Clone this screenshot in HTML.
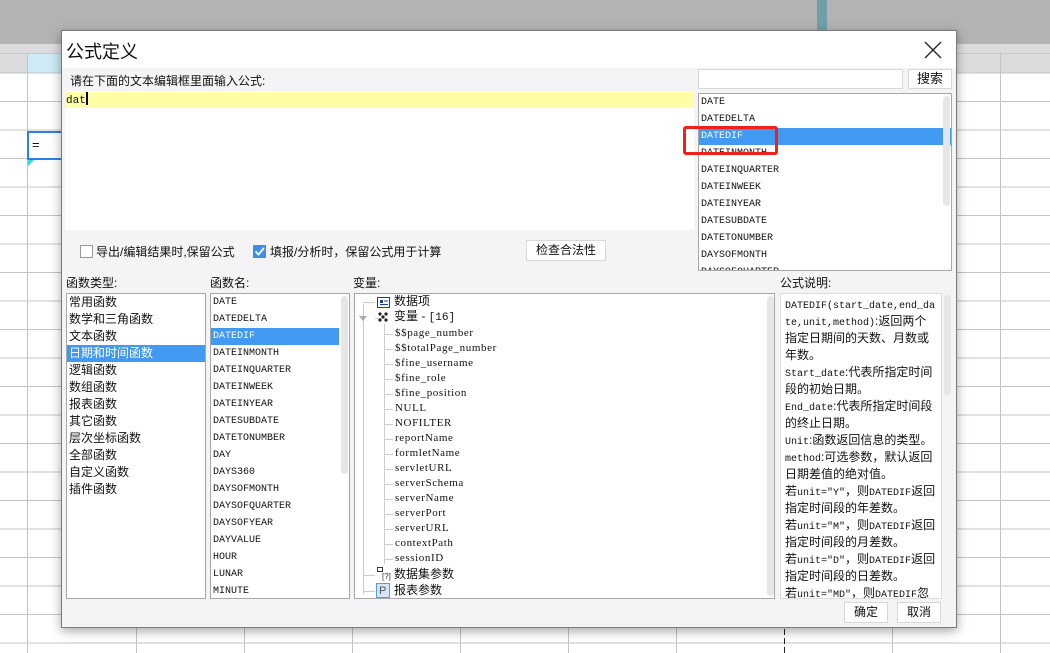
<!DOCTYPE html>
<html><head><meta charset="utf-8"><style>
*{margin:0;padding:0;box-sizing:border-box}
body{width:1050px;height:653px;overflow:hidden;position:relative;background:#fff;font-family:"Liberation Sans","Noto Sans CJK SC",sans-serif;font-size:12px;color:#111}
.abs{position:absolute}
.m{font-family:"Liberation Mono","Noto Sans CJK SC",monospace;font-size:10px}
.list{position:absolute;background:#fff;border:1px solid #a8a8a8}
.row{height:17px;line-height:17px;padding-left:2px;white-space:nowrap}
.sel{background:#4299f1;color:#fff}
.btn{position:absolute;background:#fff;border:1px solid #d8d8d8;text-align:center;font-size:12px}
.sb{position:absolute;background:#e6e6e6;border-radius:4px;width:7px}
.d span{line-height:1px}
</style></head><body>
<div class="abs" style="left:0;top:0;width:1050px;height:44px;background:#b3b3b3"></div>
<div class="abs" style="left:817px;top:0;width:10px;height:32px;background:#6f9fa8"></div>
<div class="abs" style="left:0;top:44px;width:1050px;height:29px;background:#dcdcde"></div>
<div class="abs" style="left:27px;top:54px;width:40px;height:19px;background:#cdeaf6"></div>
<div class="abs" style="left:0;top:53px;width:1050px;height:1px;background:#c8c8c8"></div>
<svg class="abs" style="left:0;top:53px" width="1050" height="600">
<g stroke="#c4c4c4" stroke-width="1">
<line x1="27.5" y1="0" x2="27.5" y2="600"/><line x1="136.5" y1="0" x2="136.5" y2="600"/><line x1="244.5" y1="0" x2="244.5" y2="600"/><line x1="352.5" y1="0" x2="352.5" y2="600"/><line x1="460.5" y1="0" x2="460.5" y2="600"/><line x1="568.5" y1="0" x2="568.5" y2="600"/><line x1="676.5" y1="0" x2="676.5" y2="600"/><line x1="892.5" y1="0" x2="892.5" y2="600"/><line x1="1000.5" y1="0" x2="1000.5" y2="600"/>
<line x1="0" y1="20" x2="1050" y2="20"/><line x1="0" y1="48.5" x2="1050" y2="48.5"/><line x1="0" y1="77" x2="1050" y2="77"/><line x1="0" y1="105.5" x2="1050" y2="105.5"/><line x1="0" y1="134" x2="1050" y2="134"/><line x1="0" y1="162.5" x2="1050" y2="162.5"/><line x1="0" y1="191" x2="1050" y2="191"/><line x1="0" y1="219.5" x2="1050" y2="219.5"/><line x1="0" y1="248" x2="1050" y2="248"/><line x1="0" y1="276.5" x2="1050" y2="276.5"/><line x1="0" y1="305" x2="1050" y2="305"/><line x1="0" y1="333.5" x2="1050" y2="333.5"/><line x1="0" y1="362" x2="1050" y2="362"/><line x1="0" y1="390.5" x2="1050" y2="390.5"/><line x1="0" y1="419" x2="1050" y2="419"/><line x1="0" y1="447.5" x2="1050" y2="447.5"/><line x1="0" y1="476" x2="1050" y2="476"/><line x1="0" y1="504.5" x2="1050" y2="504.5"/><line x1="0" y1="533" x2="1050" y2="533"/><line x1="0" y1="561.5" x2="1050" y2="561.5"/><line x1="0" y1="590" x2="1050" y2="590"/>
</g>
<line x1="784.5" y1="0" x2="784.5" y2="600" stroke="#222" stroke-dasharray="6,3"/>
</svg>
<div class="abs" style="left:27px;top:131px;width:36px;height:29px;border:2px solid #2d7ff0;padding-left:3px;line-height:24px;font-size:13px">=</div>
<div class="abs" style="left:28px;top:160px;width:0;height:0;border-left:6px solid #3dd;border-bottom:6px solid transparent"></div>
<div class="abs" style="left:61px;top:30px;width:896px;height:598px;background:#f4f4f6;border:1px solid #7a7a7a;box-shadow:0 3px 10px rgba(0,0,0,.35)">
<div class="abs" style="left:0;top:0;width:894px;height:37px;background:#fff"></div>
<div class="abs" style="left:4px;top:7px;font-size:18px">公式定义</div>
<svg class="abs" style="left:862px;top:10px" width="18" height="18"><path d="M1 1L17 17M17 1L1 17" stroke="#222" stroke-width="1.3"/></svg>
</div>
<div class="abs" style="left:70px;top:72px;font-size:12px">请在下面的文本编辑框里面输入公式:</div>
<div class="abs" style="left:65px;top:91px;width:629px;height:139px;background:#fff"></div>
<div class="abs" style="left:65px;top:92px;width:629px;height:16px;background:#ffffa8"></div>
<div class="abs m" style="left:66px;top:92px;line-height:16px;font-size:11px">dat<span style="display:inline-block;width:2px;height:13px;background:#000;vertical-align:-2px"></span></div>
<div class="abs" style="left:698px;top:69px;width:205px;height:20px;background:#fff;border:1px solid #d8d8d8"></div>
<div class="btn" style="left:908px;top:69px;width:44px;height:20px;line-height:18px;font-size:13px">搜索</div>
<div class="list m" style="left:698px;top:93px;width:254px;height:178px;overflow:hidden">
<div class="row">DATE</div><div class="row">DATEDELTA</div><div class="row sel">DATEDIF</div><div class="row">DATEINMONTH</div><div class="row">DATEINQUARTER</div><div class="row">DATEINWEEK</div><div class="row">DATEINYEAR</div><div class="row">DATESUBDATE</div><div class="row">DATETONUMBER</div><div class="row">DAYSOFMONTH</div><div class="row">DAYSOFQUARTER</div>
<div class="sb" style="left:244px;top:2px;height:110px"></div>
</div>
<div class="abs" style="left:683px;top:126px;width:95px;height:29px;border:3px solid #f0201a;border-radius:3px"></div>
<div class="abs" style="left:80px;top:245px;width:13px;height:13px;border:1px solid #999;background:#fff"></div>
<div class="abs" style="left:96px;top:243px">导出/编辑结果时,保留公式</div>
<div class="abs" style="left:253px;top:245px;width:13px;height:13px;background:#3d8fe8"><svg width="13" height="13"><path d="M2.5 6.5L5.5 9.5L11 3" stroke="#fff" stroke-width="1.8" fill="none"/></svg></div>
<div class="abs" style="left:270px;top:243px">填报/分析时，保留公式用于计算</div>
<div class="btn" style="left:526px;top:240px;width:80px;height:21px;line-height:19px">检查合法性</div>
<div class="abs" style="left:66px;top:274px">函数类型:</div>
<div class="abs" style="left:210px;top:274px">函数名:</div>
<div class="abs" style="left:353px;top:274px">变量:</div>
<div class="abs" style="left:780px;top:274px">公式说明:</div>
<div class="list" style="left:66px;top:293px;width:140px;height:306px;font-size:12px">
<div class="row">常用函数</div><div class="row">数学和三角函数</div><div class="row">文本函数</div><div class="row sel">日期和时间函数</div><div class="row">逻辑函数</div><div class="row">数组函数</div><div class="row">报表函数</div><div class="row">其它函数</div><div class="row">层次坐标函数</div><div class="row">全部函数</div><div class="row">自定义函数</div><div class="row">插件函数</div>
</div>
<div class="list m" style="left:210px;top:293px;width:140px;height:306px;overflow:hidden">
<div style="width:128px">
<div class="row">DATE</div><div class="row">DATEDELTA</div><div class="row sel">DATEDIF</div><div class="row">DATEINMONTH</div><div class="row">DATEINQUARTER</div><div class="row">DATEINWEEK</div><div class="row">DATEINYEAR</div><div class="row">DATESUBDATE</div><div class="row">DATETONUMBER</div><div class="row">DAY</div><div class="row">DAYS360</div><div class="row">DAYSOFMONTH</div><div class="row">DAYSOFQUARTER</div><div class="row">DAYSOFYEAR</div><div class="row">DAYVALUE</div><div class="row">HOUR</div><div class="row">LUNAR</div><div class="row">MINUTE</div></div>
<div class="sb" style="left:130px;top:2px;height:178px"></div>
</div>
<div class="list" style="left:354px;top:293px;width:421px;height:306px;overflow:hidden">
<svg class="abs" style="left:0;top:0" width="60" height="306"><g stroke="#ccc"><line x1="8.5" y1="10" x2="8.5" y2="300"/><line x1="8" y1="8.5" x2="20" y2="8.5"/><line x1="20" y1="24.5" x2="26" y2="24.5"/><line x1="8" y1="281.5" x2="20" y2="281.5"/><line x1="8" y1="297.5" x2="20" y2="297.5"/><line x1="29.5" y1="30" x2="29.5" y2="270"/></g>
<path d="M4 22L12 22L8 27Z" fill="#aaa"/>
<g stroke="#ccc"><line x1="30" y1="40.5" x2="38" y2="40.5"/><line x1="30" y1="55.5" x2="38" y2="55.5"/><line x1="30" y1="70.5" x2="38" y2="70.5"/><line x1="30" y1="85.5" x2="38" y2="85.5"/><line x1="30" y1="100.5" x2="38" y2="100.5"/><line x1="30" y1="115.5" x2="38" y2="115.5"/><line x1="30" y1="130.5" x2="38" y2="130.5"/><line x1="30" y1="145.5" x2="38" y2="145.5"/><line x1="30" y1="160.5" x2="38" y2="160.5"/><line x1="30" y1="175.5" x2="38" y2="175.5"/><line x1="30" y1="190.5" x2="38" y2="190.5"/><line x1="30" y1="205.5" x2="38" y2="205.5"/><line x1="30" y1="220.5" x2="38" y2="220.5"/><line x1="30" y1="235.5" x2="38" y2="235.5"/><line x1="30" y1="250.5" x2="38" y2="250.5"/><line x1="30" y1="265.5" x2="38" y2="265.5"/></g>
<rect x="22.5" y="3.5" width="12" height="10" fill="#fff" stroke="#1d3e9e"/><rect x="25" y="6" width="3" height="3" fill="#1d3e9e"/><line x1="29" y1="7" x2="33" y2="7" stroke="#1d3e9e"/><line x1="25" y1="10.5" x2="33" y2="10.5" stroke="#1d3e9e"/>
<g fill="#222"><circle cx="25" cy="20" r="1.6"/><circle cx="31" cy="20" r="1.6"/><circle cx="28" cy="23" r="1.6"/><circle cx="25" cy="26" r="1.6"/><circle cx="31" cy="26" r="1.6"/></g>
<rect x="22.5" y="273.5" width="5" height="4" fill="none" stroke="#334"/><text x="27" y="285" font-size="8" fill="#334">[?]</text>
<rect x="21.5" y="289.5" width="13" height="14" fill="#d4e6f7" stroke="#5a9be0"/><text x="24" y="300" font-size="11" fill="#555">P</text>
</svg>
<div class="abs" style="left:39px;top:0;line-height:15px">数据项</div>
<div class="abs" style="left:39px;top:15px;line-height:15px">变量 - <span style="font-family:'Liberation Mono',monospace;font-size:11px">[16]</span></div>
<div class="abs" style="left:40px;top:32px;line-height:15px;font-family:'Liberation Serif',serif;font-size:11px;letter-spacing:.6px">$$page_number<br>$$totalPage_number<br>$fine_username<br>$fine_role<br>$fine_position<br>NULL<br>NOFILTER<br>reportName<br>formletName<br>servletURL<br>serverSchema<br>serverName<br>serverPort<br>serverURL<br>contextPath<br>sessionID</div>
<div class="abs" style="left:39px;top:273px;line-height:15px">数据集参数</div>
<div class="abs" style="left:39px;top:289px;line-height:15px">报表参数</div>
<div class="sb" style="left:412px;top:2px;height:300px"></div>
</div>
<div class="list" style="left:780px;top:293px;width:172px;height:306px;border:none;background:#f4f4f6">
<div class="abs d" style="left:0;top:0;width:162px;height:306px;background:#fff;border:1px solid #ddd;padding:2px 4px;font-size:12px;line-height:17px;overflow:hidden;word-break:break-all"><span class="m">DATEDIF(start_date,end_date,unit,method)</span>:返回两个指定日期间的天数、月数或年数。<br><span class="m">Start_date</span>:代表所指定时间段的初始日期。<br><span class="m">End_date</span>:代表所指定时间段的终止日期。<br><span class="m">Unit</span>:函数返回信息的类型。<br><span class="m">method</span>:可选参数，默认返回日期差值的绝对值。<br>若<span class="m">unit="Y"</span>，则<span class="m">DATEDIF</span>返回指定时间段的年差数。<br>若<span class="m">unit="M"</span>，则<span class="m">DATEDIF</span>返回指定时间段的月差数。<br>若<span class="m">unit="D"</span>，则<span class="m">DATEDIF</span>返回指定时间段的日差数。<br>若<span class="m">unit="MD"</span>，则<span class="m">DATEDIF</span>忽略年和月，返回指定时间段的日差数。</div>
<div class="sb" style="left:164px;top:2px;height:100px"></div>
</div>
<div class="btn" style="left:844px;top:602px;width:44px;height:21px;line-height:19px">确定</div>
<div class="btn" style="left:897px;top:602px;width:44px;height:21px;line-height:19px">取消</div>
</body></html>
